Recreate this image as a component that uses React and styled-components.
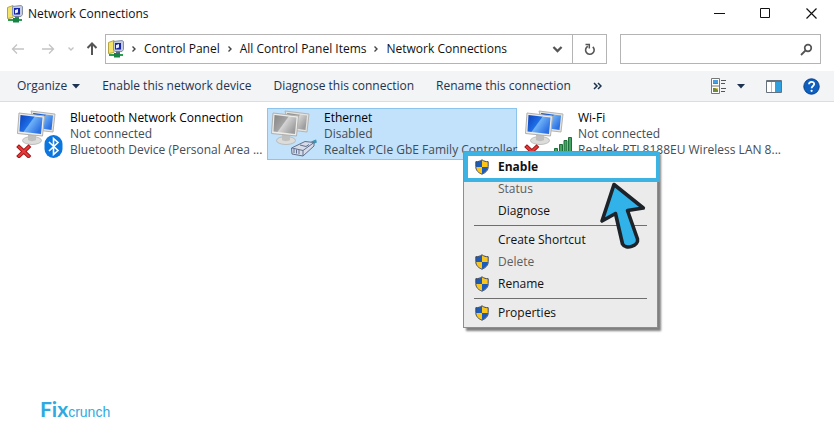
import React from 'react'
import styled, { createGlobalStyle } from 'styled-components'

const GlobalStyle = createGlobalStyle`
  * {
    box-sizing: border-box;
  }

  body {
    margin: 0;
    background-color: #fff;
    color: #111;
    font-family: "Open Sans", "Noto Sans", sans-serif;
    font-size: 12px;
    line-height: 16px;
  }

  button, input {
    font: inherit;
    color: inherit;
  }
`

const Window = styled.div`
  display: flex;
  flex-direction: column;
  min-height: 100vh;
`

const IconButton = styled.button`
  display: flex;
  flex: none;
  align-items: center;
  justify-content: center;
  width: ${(props) => props.$width || 30}px;
  height: 28px;
  padding: 0;
  border: none;
  background-color: transparent;
`

const TitleBar = styled.header`
  display: flex;
  align-items: center;
  gap: 5px;
  height: 27px;
  padding-left: 7px;

  h1 {
    flex: 1;
    margin: 0;
    font-size: 12px;
    font-weight: 400;
  }
`

const Captions = styled.div`
  display: flex;
`

const NavBar = styled.nav`
  display: flex;
  align-items: center;
  margin-top: 7px;
  padding: 0 13px 0 3px;
`

const AddressBar = styled.div`
  display: flex;
  flex: 5 1 50px;
  align-items: center;
  min-width: 0;
  height: 30px;
  padding-left: 2px;
  border: 1px solid #b4b4b4;
`

const Crumbs = styled.ol`
  display: flex;
  flex: 1;
  align-items: center;
  gap: 6px;
  margin: 0;
  padding: 0 0 0 6px;
  list-style: none;
  white-space: nowrap;

  li {
    display: flex;
    align-items: center;
    gap: 6px;
  }

  a {
    color: #111;
    text-decoration: none;
  }
`

const Refresh = styled.div`
  border-left: 1px solid #b4b4b4;
`

const SearchBox = styled.label`
  display: flex;
  flex: 2 1 20px;
  align-items: center;
  min-width: 0;
  height: 30px;
  margin-left: 13px;
  padding-right: 7px;
  border: 1px solid #b4b4b4;

  input {
    flex: 1;
    min-width: 0;
    height: 100%;
    border: none;
    outline: none;
    background-color: transparent;
  }
`

const Toolbar = styled.div`
  display: flex;
  align-items: center;
  height: 31px;
  margin-top: 7px;
  padding: 0 8px 0 17px;
  border-bottom: 1px solid #dcdddf;
  background-color: #f2f4f6;
  color: #1b3350;
`

const Commands = styled.div`
  display: flex;
  flex: 1;
  align-items: center;
  gap: 22px;
`

const Command = styled.button`
  display: flex;
  align-items: center;
  gap: 5px;
  padding: 0;
  border: none;
  background-color: transparent;
  white-space: nowrap;
`

const Connections = styled.ul`
  display: flex;
  gap: 4px;
  margin: 0;
  padding: 6px 0 0 13px;
  list-style: none;
`

const Connection = styled.li`
  position: relative;
  flex: none;
  width: 250px;
`

const Tile = styled.button`
  display: flex;
  gap: 6px;
  width: 100%;
  padding: 1px 2px;
  border: 1px solid ${(props) => (props.$selected ? '#8cc4ee' : 'transparent')};
  background-color: ${(props) => (props.$selected ? '#c2e1fb' : 'transparent')};
  text-align: left;

  svg {
    flex: none;
  }
`

const Details = styled.span`
  display: flex;
  flex-direction: column;
  color: #444c54;
  white-space: nowrap;

  strong {
    color: #000;
    font-weight: 400;
  }
`

const Menu = styled.div`
  position: absolute;
  z-index: 1;
  top: 43px;
  left: 196px;
  width: 195px;
  padding: 4px 1px 3px 4px;
  border: 1px solid #8e8e8e;
  background-color: #ebebeb;
  box-shadow: 3px 3px 2px rgba(0, 0, 0, 0.5);

  hr {
    height: 1px;
    margin: 3px 9px 3px 6px;
    border: none;
    background-color: #6e6e6e;
  }
`

const MenuItem = styled.button`
  display: flex;
  align-items: center;
  gap: 9px;
  width: 100%;
  height: 22px;
  padding: 0 7px;
  border: none;
  background-color: ${(props) => (props.$active ? '#fff' : 'transparent')};
  outline: ${(props) => (props.$active ? '4px solid #3db3e3' : 'none')};
  color: #111;
  font-weight: ${(props) => (props.$active ? 700 : 400)};

  &:disabled {
    color: #5e5e5e;
  }
`

const IconSlot = styled.span`
  display: flex;
  width: 14px;
`

const Pointer = styled.svg`
  position: absolute;
  top: 29px;
  left: 134px;
  pointer-events: none;
`

const Logo = styled.footer`
  display: flex;
  align-items: baseline;
  margin-top: auto;
  padding: 0 0 25px 40px;
  color: #2fa9df;
  font-family: "Liberation Sans", sans-serif;
  font-size: 14px;
  line-height: 22px;

  b {
    font-family: Lato, sans-serif;
    font-size: 21px;
    font-weight: 700;
  }
`

function NetworkIcon() {
  return (
    <svg width="16" height="18" viewBox="0 0 16 18">
      <path d="M.5 2.500 6 .5v12l-5.500 1z" fill="#f3e36b" stroke="#b5a542" />
      <path d="M5.500 1.500 14 .5l1.500 1v8L14 11.500H7L5.500 10z" fill="#c5cce0" stroke="#8790aa" />
      <path d="M7 3h6v6.500H7z" fill="#1324a8" />
      <path d="M8 5 11 4v3.500L8 8.500z" fill="#e9f0ff" />
      <path d="M8 11.500h4V13H8z" fill="#5c6a8a" />
      <path d="M1 15h14" stroke="#2a9d55" strokeWidth="2" />
      <path d="M6 13h6v4.500H6z" fill="#168344" />
    </svg>
  )
}

function Caret() {
  return (
    <svg width="8" height="5" viewBox="0 0 8 5">
      <path d="M0 0h8L4 4.500z" fill="#1b3350" />
    </svg>
  )
}

function Arrow({ color, turn, strong }) {
  return (
    <svg width="14" height="14" viewBox="0 0 14 14">
      <path
        d="M1.500 7h11.500M6 2.500 1.500 7 6 11.500"
        transform={`rotate(${turn} 7 7)`}
        fill="none"
        stroke={color}
        strokeWidth={strong ? 2 : 1.3}
      />
    </svg>
  )
}

function Chevron({ color, turn = 0, size = 8 }) {
  return (
    <svg width={size} height={size} viewBox="0 0 8 8">
      <path
        d="M2.500 1.500 5 4 2.500 6.500"
        transform={`rotate(${turn} 4 4)`}
        fill="none"
        stroke={color}
        strokeWidth="1.400"
      />
    </svg>
  )
}

function Shield() {
  return (
    <svg width="14" height="16" viewBox="0 0 14 16">
      <path d="M7 1C5 2.500 3 2.800 1 2.800V8h6z" fill="#1c5bb8" />
      <path d="M7 1c2 1.500 4 1.800 6 1.800V8H7z" fill="#fbc61c" />
      <path d="M1 8c.3 3.500 2.500 5.500 6 7V8z" fill="#fbc61c" />
      <path d="M13 8c-.3 3.500-2.500 5.500-6 7V8z" fill="#1c5bb8" />
      <path
        d="M7 .8C5 2.300 3 2.700.8 2.700V7.500c0 4 2.500 6.200 6.200 7.700 3.700-1.500 6.200-3.700 6.200-7.700V2.700C11 2.700 9 2.300 7 .8z"
        fill="none"
        stroke="#3d4657"
        strokeWidth="1"
      />
    </svg>
  )
}

function AdapterIcon({ kind }) {
  const off = kind === 'ethernet'
  const id = `screen-${kind}`
  return (
    <svg width="48" height="48" viewBox="0 0 48 48">
      <defs>
        <linearGradient id={id} x1="0" y1="0" x2="1" y2="0.6">
          <stop offset="0" stopColor={off ? '#848484' : '#0c3fbb'} />
          <stop offset="0.5" stopColor={off ? '#a4a4a4' : '#1f6fe6'} />
          <stop offset="0.54" stopColor={off ? '#d4d4d4' : '#6fb2f8'} />
          <stop offset="1" stopColor={off ? '#9c9c9c' : '#2b6fe2'} />
        </linearGradient>
      </defs>
      <path d="M15 1 39 4 37 22 20 20z" fill="#e3e3e0" stroke="#b4b5b3" />
      <path d="M17 3 37 5.500 35.500 20 22 18z" fill={`url(#${id})`} />
      <ellipse cx="16" cy="30.500" rx="9.500" ry="4" fill="#dcdddb" stroke="#b1b2b0" strokeWidth=".8" />
      <path d="M12 24h8v6c-2 1.500-6 1.500-8 0z" fill="#bfc0be" />
      <path d="M3 3 28.500 6 26.500 26 1.500 23.500z" fill="#ececea" stroke="#b0b1af" />
      <path d="M4.500 5 26.500 7.500 25 24 3.500 21.500z" fill={`url(#${id})`} />
      {!off && (
        <g fill="none" strokeLinecap="square">
          <path d="M3 37 12.500 46M12.500 37 3 46" stroke="#9c1616" strokeWidth="4" />
          <path d="M3 37 12.500 46M12.500 37 3 46" stroke="#e5393b" strokeWidth="2.200" />
        </g>
      )}
      {kind === 'bluetooth' && (
        <g>
          <rect x="28.500" y="25" width="18" height="23" rx="9" fill="#0a76e0" />
          <path
            d="M33 32 42 40.500l-4.500 4V28.500L42 32.500 33 41"
            fill="none"
            stroke="#fff"
            strokeWidth="1.600"
          />
        </g>
      )}
      {off && (
        <g strokeLinejoin="round">
          <path d="M39 34.500c3-1 4-2.500 7.500-3.500" fill="none" stroke="#3b96b9" strokeWidth="3" />
          <path d="M21.500 38 35 31.500l9 1v3.500L33 46l-11-2z" fill="#d5dbe8" stroke="#61708d" />
          <path d="m22 38 11 2.500 11-8M33 40.500V46M24 39v4M26.500 39.500v4M29 40v4M30 35l6 1.500 3-2" fill="none" stroke="#61708d" />
        </g>
      )}
      {kind === 'wifi' && (
        <g fill="#45a462" stroke="#1f6d3a">
          <path d="M26.500 42.500h2v5h-2zM30.500 38.500h3v9h-3zM35.500 34.500h3v13h-3zM40 30.500h3v17h-3zM44.500 27.500h3v20h-3z" />
        </g>
      )}
    </svg>
  )
}

const crumbs = ['Control Panel', 'All Control Panel Items', 'Network Connections']

const connections = [
  {
    kind: 'bluetooth',
    name: 'Bluetooth Network Connection',
    status: 'Not connected',
    device: 'Bluetooth Device (Personal Area ...',
  },
  {
    kind: 'ethernet',
    name: 'Ethernet',
    status: 'Disabled',
    device: 'Realtek PCIe GbE Family Controller',
    selected: true,
  },
  {
    kind: 'wifi',
    name: 'Wi-Fi',
    status: 'Not connected',
    device: 'Realtek RTL8188EU Wireless LAN 8...',
  },
]

const menuItems = [
  { label: 'Enable', shield: true, active: true },
  { label: 'Status', disabled: true },
  { label: 'Diagnose' },
  null,
  { label: 'Create Shortcut' },
  { label: 'Delete', shield: true, disabled: true },
  { label: 'Rename', shield: true },
  null,
  { label: 'Properties', shield: true },
]

function ContextMenu() {
  return (
    <Menu>
      {menuItems.map((item, i) =>
        item ? (
          <MenuItem key={i} $active={item.active} disabled={item.disabled}>
            <IconSlot>{item.shield && <Shield />}</IconSlot>
            {item.label}
          </MenuItem>
        ) : (
          <hr key={i} />
        )
      )}
      <Pointer width="50" height="70" viewBox="598 181 50 70">
        <path
          d="M614 184.500 643.300 208 627.500 210.500 637.500 239c1.500 7-12 11-15 5L615.500 213.500 602 221z"
          fill="#31b2e8"
          stroke="#1d2328"
          strokeWidth="3.600"
          strokeLinejoin="round"
        />
      </Pointer>
    </Menu>
  )
}

export default function App() {
  return (
    <Window>
      <GlobalStyle />
      <TitleBar>
        <NetworkIcon />
        <h1>Network Connections</h1>
        <Captions>
          <IconButton $width={46} aria-label="Minimize">
            <svg width="11" height="11" viewBox="0 0 11 11">
              <path d="M0 5.500h11" stroke="#111" />
            </svg>
          </IconButton>
          <IconButton $width={46} aria-label="Maximize">
            <svg width="11" height="11" viewBox="0 0 11 11">
              <path d="M.5.5h9v9h-9z" fill="none" stroke="#111" />
            </svg>
          </IconButton>
          <IconButton $width={46} aria-label="Close">
            <svg width="11" height="11" viewBox="0 0 11 11">
              <path d="m.5.5 10 10M10.500.5l-10 10" stroke="#111" strokeWidth="1.200" />
            </svg>
          </IconButton>
        </Captions>
      </TitleBar>

      <NavBar>
        <IconButton aria-label="Back">
          <Arrow color="#c3c3c3" turn={0} />
        </IconButton>
        <IconButton aria-label="Forward">
          <Arrow color="#c3c3c3" turn={180} />
        </IconButton>
        <IconButton $width={16} aria-label="Recent locations">
          <Chevron color="#c3c3c3" turn={90} />
        </IconButton>
        <IconButton $width={26} aria-label="Up">
          <Arrow color="#555" turn={90} strong />
        </IconButton>
        <AddressBar>
          <NetworkIcon />
          <Crumbs>
            {crumbs.map((name) => (
              <li key={name}>
                <Chevron color="#444" />
                <a href="#">{name}</a>
              </li>
            ))}
          </Crumbs>
          <IconButton aria-label="Previous locations">
            <Chevron color="#555" turn={90} size={13} />
          </IconButton>
          <Refresh>
            <IconButton $width={33} aria-label="Refresh">
              <svg width="12" height="13" viewBox="0 0 12 13">
                <path d="M3.800 3.200A4.300 4.300 0 1 0 8.800 3.800" fill="none" stroke="#555" strokeWidth="1.600" />
                <path d="M1.500 1.500h3.800v4" fill="none" stroke="#555" strokeWidth="1.500" />
              </svg>
            </IconButton>
          </Refresh>
        </AddressBar>
        <SearchBox>
          <input type="text" aria-label="Search Network Connections" />
          <svg width="13" height="13" viewBox="0 0 13 13">
            <circle cx="8" cy="5" r="3.300" fill="none" stroke="#555" strokeWidth="1.700" />
            <path d="M5.500 7.500 1 12" stroke="#555" strokeWidth="1.800" />
          </svg>
        </SearchBox>
      </NavBar>

      <Toolbar>
        <Commands>
          <Command>
            Organize <Caret />
          </Command>
          <Command>Enable this network device</Command>
          <Command>Diagnose this connection</Command>
          <Command>Rename this connection</Command>
          <Command aria-label="More commands">
            <svg width="9" height="8" viewBox="0 0 9 8">
              <path d="M1 1 4 4 1 7M5 1l3 3-3 3" fill="none" stroke="#1b3350" strokeWidth="1.500" />
            </svg>
          </Command>
        </Commands>
        <IconButton $width={22} aria-label="Change your view">
          <svg width="16" height="16" viewBox="0 0 16 16">
            <path d="M.5.5h8v15h-8zM.5 8h8" fill="#fff" stroke="#777" />
            <path d="M2 2h5v4H2z" fill="#4b9be0" />
            <path d="M2 5h5v1H2zM2 10h5v4H2z" fill="#6f8b3a" />
            <path d="M4 10h3v2z" fill="#e3c44a" />
            <path d="M10 2.500h5M10 5.500h4M10 10.500h5M10 13.500h4" stroke="#555" />
          </svg>
        </IconButton>
        <IconButton $width={22} aria-label="More options">
          <Caret />
        </IconButton>
        <IconButton $width={44} aria-label="Show the preview pane">
          <svg width="16" height="13" viewBox="0 0 16 13">
            <path d="M.5.5h15v12H.5z" fill="#fff" stroke="#66717d" />
            <path d="M1 1.500h14" stroke="#66717d" />
            <path d="M9 2h6v10H9z" fill="#2f9fe0" />
            <path d="M5.500 2v10" stroke="#b5bcc4" />
          </svg>
        </IconButton>
        <IconButton aria-label="Help">
          <svg width="17" height="17" viewBox="0 0 17 17">
            <circle cx="8.500" cy="8.500" r="7.700" fill="#0d5fc0" stroke="#0a3f8a" />
            <path
              d="M6 6.300c0-3.300 5.200-3.300 5.200-.2 0 1.900-2.600 2-2.600 4.200"
              fill="none"
              stroke="#fff"
              strokeWidth="1.800"
            />
            <circle cx="8.600" cy="12.800" r="1.100" fill="#fff" />
          </svg>
        </IconButton>
      </Toolbar>

      <Connections>
        {connections.map((item) => (
          <Connection key={item.kind}>
            <Tile $selected={item.selected}>
              <AdapterIcon kind={item.kind} />
              <Details>
                <strong>{item.name}</strong>
                <span>{item.status}</span>
                <span>{item.device}</span>
              </Details>
            </Tile>
            {item.selected && <ContextMenu />}
          </Connection>
        ))}
      </Connections>

      <Logo>
        <b>Fix</b>crunch
      </Logo>
    </Window>
  )
}
